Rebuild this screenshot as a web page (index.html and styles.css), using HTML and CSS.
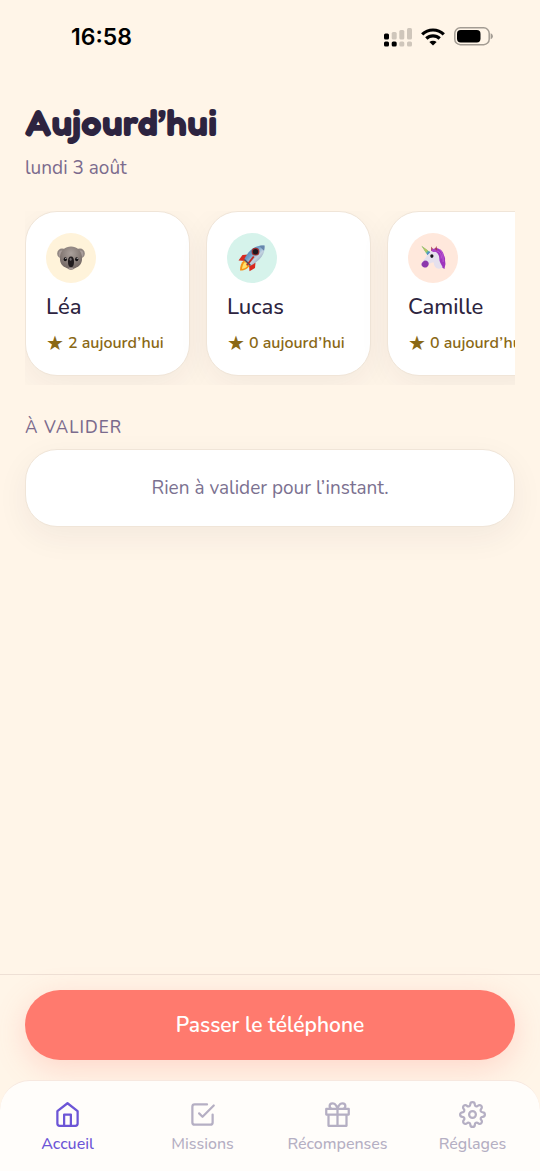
FILE: index.html
```html
<!DOCTYPE html>
<html lang="fr">
<head>
<meta charset="utf-8">
<meta name="viewport" content="width=device-width, initial-scale=1">
<title>Aujourd’hui</title>
<link rel="stylesheet" href="styles.css">
</head>
<body>
<div class="app">
  <header class="status">
    <time class="status-time">16:58</time>
    <div class="status-icons">
      <svg width="28" height="20" viewBox="0 0 28 20" aria-hidden="true">
        <g fill="#000"><rect x="0" y="6.500" width="5" height="6" rx="1.500"/><rect x="0" y="14.500" width="5" height="5" rx="1.500"/><rect x="7.700" y="14.500" width="5" height="5" rx="1.500"/></g>
        <g fill="#cfc6bb"><rect x="7.700" y="5" width="5" height="7.500" rx="1.500"/><rect x="15.300" y="3" width="5" height="9.500" rx="1.500"/><rect x="23" y="1" width="5" height="11.500" rx="1.500"/><rect x="15.300" y="14.500" width="5" height="5" rx="1.500"/><rect x="23" y="14.500" width="5" height="5" rx="1.500"/></g>
      </svg>
      <svg width="24" height="18" viewBox="0 0 24 18" aria-hidden="true">
        <g fill="none" stroke="#000" stroke-width="3.200"><path d="M1.200 6.400a15.500 15.500 0 0 1 21.600 0"/><path d="M5.300 10.500a9.600 9.600 0 0 1 13.400 0"/></g>
        <path d="M12 17.600l-3.600-3.500a5.200 5.200 0 0 1 7.200 0z"/>
      </svg>
      <svg width="39" height="19" viewBox="0 0 39 19" aria-hidden="true">
        <rect x=".8" y=".8" width="34.400" height="16.900" rx="5.500" fill="none" stroke="#a39c93" stroke-width="1.500"/>
        <rect x="3" y="3" width="23.500" height="12.500" rx="3.700"/>
        <path d="M36.600 6.300c3 1 3 5 0 6z" fill="#a39c93"/>
      </svg>
    </div>
  </header>

  <main class="content">
    <h1 class="title">Aujourd’hui</h1>
    <p class="date">lundi 3 août</p>

    <ul class="kids">
      <li class="card kid">
        <span class="avatar avatar-sun">
          <svg width="28" height="28" viewBox="0 0 28 28" aria-hidden="true">
            <defs><radialGradient id="fur" cx=".5" cy=".3" r=".75"><stop offset="0" stop-color="#aaa09b"/><stop offset="1" stop-color="#6c605c"/></radialGradient></defs>
            <g fill="#8f8581"><ellipse cx="5" cy="9.500" rx="4.800" ry="5"/><ellipse cx="23" cy="9.500" rx="4.800" ry="5"/></g>
            <g fill="#a99d9a"><ellipse cx="4.700" cy="10" rx="3" ry="3.400"/><ellipse cx="23.300" cy="10" rx="3" ry="3.400"/></g>
            <path d="M14 2.500c6 0 10.500 4 11 10.500.6 6.500-2.500 9.500-6.500 11-1.800.8-2.500 1.700-4.500 1.700s-2.700-.9-4.500-1.700C5.500 22.500 2.400 19.500 3 13 3.500 6.500 8 2.500 14 2.500z" fill="url(#fur)"/>
            <path d="M14 12.500c2.200 0 3 2 3 5s-.7 5.800-3 5.800-3-2.800-3-5.800.8-5 3-5z" fill="#211c1e"/>
            <ellipse cx="13.600" cy="15.300" rx="1" ry="1.500" fill="#746d70"/>
            <g fill="#141114"><ellipse cx="8.300" cy="15.300" rx="1.600" ry="2"/><ellipse cx="19.700" cy="15.300" rx="1.600" ry="2"/></g>
            <g fill="#fff"><circle cx="8.800" cy="14.500" r=".5"/><circle cx="20.200" cy="14.500" r=".5"/></g>
            <path d="M11 24q3-1 6 0-1.500 1.600-3 1.600T11 24z" fill="#a89b97"/>
          </svg>
        </span>
        <h2 class="kid-name">Léa</h2>
        <p class="kid-score"><span class="star">★</span> 2 aujourd’hui</p>
      </li>
      <li class="card kid">
        <span class="avatar avatar-mint">
          <svg width="28" height="28" viewBox="0 0 28 28" aria-hidden="true">
            <defs><linearGradient id="hull" x1="0" y1="0" x2="1" y2="1"><stop offset="0" stop-color="#3f6f9f"/><stop offset=".4" stop-color="#6f9fca"/><stop offset=".6" stop-color="#c3d3e0"/><stop offset="1" stop-color="#53718f"/></linearGradient></defs>
            <path d="M10 10.500 4.500 11 .5 16.500l7 .5z" fill="#d92a20"/>
            <path d="M17.500 18.500 17 24l-5.500 3.300L11 21z" fill="#d92a20"/>
            <path d="M6 16.500c-3 2-4 6-4 10 4 .2 8-1.500 9.500-5z" fill="#f49418"/>
            <path d="M7 18c-2 2-2.800 4.500-3 7 2.700-.5 5-1.700 6-4z" fill="#ffe26a"/>
            <path d="M26.500 1.500c.8 7.500-3 14.500-14.500 20.500L6 16C10.500 5.500 18 1 26.500 1.500z" fill="url(#hull)"/>
            <path d="M26.500 1.500c.1 2 0 3.500-.5 5.200L21 1.900c2-.5 3.500-.5 5.500-.4z" fill="#6687ac"/>
            <circle cx="17.500" cy="7.700" r="3.900" fill="#9c2f30"/><circle cx="17.500" cy="7.700" r="2.700" fill="#1c151f"/>
            <path d="m15 12-7 9 1.700.8L16.500 13z" fill="#c32a23"/>
            <path d="m6.300 15.500 6.200 6" stroke="#5c4950" stroke-width="1.500"/>
          </svg>
        </span>
        <h2 class="kid-name">Lucas</h2>
        <p class="kid-score"><span class="star">★</span> 0 aujourd’hui</p>
      </li>
      <li class="card kid">
        <span class="avatar avatar-peach">
          <svg width="27" height="27" viewBox="0 0 28 28" aria-hidden="true">
            <path d="M12 5c5-3.500 11-1 12.500 4.500.5 2.300 1.800 3 1.500 5.500s1 4 0 6.500c-.3 1.500-.5 2-.5 3.500l-6-3.500L13 10z" fill="#9e35bd"/>
            <path d="M17 6c4 1 5.500 4 5 8M20 4.500c4 3 4 7 4 13" fill="none" stroke="#c05bd6" stroke-width="1"/>
            <path d="M12 6c4-.5 8 3 8 8 0 4 2 5.500 3.500 9-2.500 2.500-7 1.800-8.500-1.500-.8-1.500-.5-3-1-3.500-3 1-5 1-6.500 3.500-2 3-6 1.500-6-1.500C2 16 6.500 14 7 11c.5-2.500 2-4.500 5-5z" fill="#e5e0ed"/>
            <path d="M5 16c3 0 4.500 2 4 4.300-1 3.200-3.300 3.700-5.300 2.700C.5 21.500 1 18 5 16z" fill="#8d38ac"/>
            <path d="m7.700 10.300 2.800-2.800L1.500.8z" fill="#54bea1"/><path d="m6.200 8 2.200-2.200L1.500.8z" fill="#b4c464"/><path d="m7.700 10.300 2.800-2.800-1.100-.9-2.500 2.500z" fill="#5686cc"/>
            <path d="m11.500 6.500.2-5L14 5zM15 5.500l2-4.500 1 5z" fill="#a53656"/>
            <path d="M11.500 5.300c2-2 5-1.200 6 1.200-1.500 1-3 1-4.500.5z" fill="#ad44c7"/>
            <ellipse cx="12.300" cy="11.500" rx="1.700" ry="1.900" fill="#17131d"/>
          </svg>
        </span>
        <h2 class="kid-name">Camille</h2>
        <p class="kid-score"><span class="star">★</span> 0 aujourd’hui</p>
      </li>
    </ul>

    <section>
      <h2 class="section-title">À VALIDER</h2>
      <p class="card empty">Rien à valider pour l’instant.</p>
    </section>
  </main>

  <footer class="bottom">
    <div class="action">
      <button class="pass" type="button">Passer le téléphone</button>
    </div>
    <nav class="tabs">
      <a class="tab tab-active" href="#accueil" aria-current="page">
        <svg class="tab-icon" viewBox="0 0 24 24" aria-hidden="true"><path d="m3 9 9-7 9 7v11a2 2 0 0 1-2 2H5a2 2 0 0 1-2-2z"/><path d="M9 22V12h6v10"/></svg>
        Accueil
      </a>
      <a class="tab" href="#missions">
        <svg class="tab-icon" viewBox="0 0 24 24" aria-hidden="true"><path d="m9 11 3 3L22 4"/><path d="M21 12v7a2 2 0 0 1-2 2H5a2 2 0 0 1-2-2V5a2 2 0 0 1 2-2h11"/></svg>
        Missions
      </a>
      <a class="tab" href="#recompenses">
        <svg class="tab-icon" viewBox="0 0 24 24" aria-hidden="true"><path d="M20 12v10H4V12M2 7h20v5H2zM12 22V7M12 7H7.500a2.500 2.500 0 0 1 0-5C11 2 12 7 12 7zM12 7h4.500a2.500 2.500 0 0 0 0-5C13 2 12 7 12 7z"/></svg>
        Récompenses
      </a>
      <a class="tab" href="#reglages">
        <svg class="tab-icon" viewBox="0 0 24 24" aria-hidden="true"><circle cx="12" cy="12" r="3"/><path d="M19.400 15a1.650 1.650 0 0 0 .33 1.820l.06.06a2 2 0 0 1 0 2.830 2 2 0 0 1-2.830 0l-.06-.06a1.650 1.650 0 0 0-1.820-.33 1.650 1.650 0 0 0-1 1.510V21a2 2 0 0 1-2 2 2 2 0 0 1-2-2v-.09A1.650 1.650 0 0 0 9 19.400a1.650 1.650 0 0 0-1.820.33l-.06.06a2 2 0 0 1-2.830 0 2 2 0 0 1 0-2.830l.06-.06a1.650 1.650 0 0 0 .33-1.820 1.650 1.650 0 0 0-1.510-1H3a2 2 0 0 1-2-2 2 2 0 0 1 2-2h.09A1.650 1.650 0 0 0 4.600 9a1.650 1.650 0 0 0-.33-1.820l-.06-.06a2 2 0 0 1 0-2.830 2 2 0 0 1 2.830 0l.06.06a1.650 1.650 0 0 0 1.820.33H9a1.650 1.650 0 0 0 1-1.510V3a2 2 0 0 1 2-2 2 2 0 0 1 2 2v.09a1.650 1.650 0 0 0 1 1.510 1.650 1.650 0 0 0 1.820-.33l.06-.06a2 2 0 0 1 2.830 0 2 2 0 0 1 0 2.830l-.06.06a1.650 1.650 0 0 0-.33 1.820V9a1.650 1.650 0 0 0 1.510 1H21a2 2 0 0 1 2 2 2 2 0 0 1-2 2h-.09a1.650 1.650 0 0 0-1.510 1z"/></svg>
        Réglages
      </a>
    </nav>
  </footer>
</div>
</body>
</html>
```
FILE: styles.css
```css
* {
  box-sizing: border-box;
}

body,
h1,
h2,
p,
ul {
  margin: 0;
  padding: 0;
}

body {
  background: #fff5e8;
  color: #2d2440;
  font-family: Nunito, Lato, "Open Sans", sans-serif;
}

.app {
  display: flex;
  flex-direction: column;
  min-height: 100vh;
}

.status {
  display: flex;
  align-items: center;
  justify-content: space-between;
  height: 73px;
  padding: 0 47px 0 71px;
}

.status-time {
  color: #000;
  font: 600 23px/28px Inter, sans-serif;
}

.status-icons {
  display: flex;
  align-items: center;
  gap: 9px;
}

.content {
  flex: 1;
  padding: 26px 25px 40px;
}

.title {
  font: 700 37px/48px Fredoka, Lato, sans-serif;
}

.date {
  margin-top: 7px;
  color: #7b6b8d;
  font-size: 19px;
  line-height: 28px;
}

.kids {
  display: flex;
  gap: 16px;
  margin-top: 29px;
  padding-bottom: 9px;
  overflow: hidden;
  list-style: none;
}

.card {
  border: 1px solid #f0e5d8;
  border-radius: 32px;
  background: #fff;
  box-shadow: 0 10px 32px rgba(45, 36, 64, 0.06);
}

.kid {
  flex: 0 0 165px;
  padding: 21px 20px 20px;
  white-space: nowrap;
}

.avatar {
  display: flex;
  align-items: center;
  justify-content: center;
  width: 50px;
  height: 50px;
  border-radius: 50%;
}

.avatar-sun {
  background: #fff3da;
}

.avatar-mint {
  background: #d6f3eb;
}

.avatar-peach {
  background: #ffe8dc;
}

.kid-name {
  margin-top: 9px;
  font-size: 22px;
  font-weight: 500;
  line-height: 30px;
}

.kid-score {
  display: flex;
  align-items: center;
  gap: 4px;
  margin-top: 9px;
  color: #8a6814;
  font-size: 16px;
  font-weight: 600;
  line-height: 24px;
}

.star {
  font: 400 20px/24px "DejaVu Sans", sans-serif;
}

.section-title {
  margin-top: 31px;
  color: #7b6b8d;
  font-size: 17px;
  font-weight: 500;
  letter-spacing: 1px;
  line-height: 24px;
}

.empty {
  margin-top: 9px;
  padding: 24px;
  color: #7b7190;
  font-size: 19px;
  line-height: 28px;
  text-align: center;
}

.bottom {
  position: sticky;
  bottom: 0;
}

.action {
  padding: 15px 25px 20px;
  border-top: 1px solid #eee0d5;
  background: #fff5e8;
}

.pass {
  width: 100%;
  height: 70px;
  border: 0;
  border-radius: 35px;
  background: #ff7a6e;
  box-shadow: 0 8px 30px rgba(255, 122, 110, 0.25);
  color: #fff;
  font: 600 21px/30px Nunito, Lato, sans-serif;
}

.tabs {
  position: relative;
  display: flex;
  padding: 20px 0 16px;
  border-top: 1px solid #f7e8df;
  border-radius: 30px 30px 0 0;
  background: #fffdfa;
}

.tab {
  display: flex;
  flex: 1;
  flex-direction: column;
  align-items: center;
  gap: 5px;
  color: #b5afc3;
  font-size: 16px;
  font-weight: 500;
  line-height: 22px;
  text-decoration: none;
}

.tab-active {
  color: #6c55d6;
}

.tab-icon {
  width: 27px;
  height: 27px;
  fill: none;
  stroke: currentColor;
  stroke-width: 2;
  stroke-linecap: round;
  stroke-linejoin: round;
}
```
